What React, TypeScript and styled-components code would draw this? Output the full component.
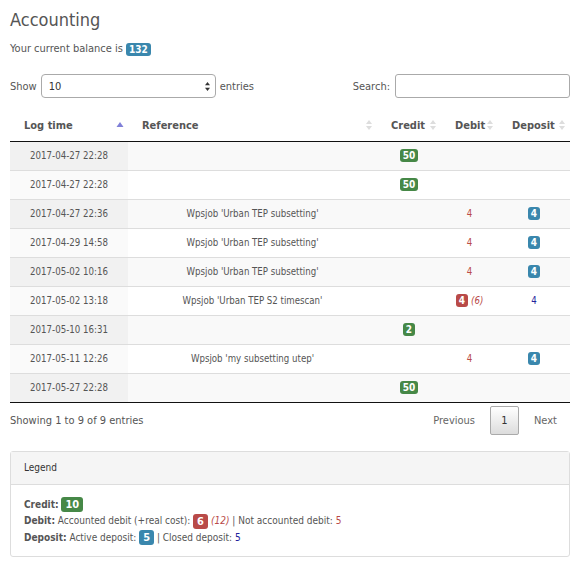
import React from "react";
import styled, { createGlobalStyle } from "styled-components";

const Global = createGlobalStyle`
  html, body { margin: 0; padding: 0; background: #fff; }
  body { font-family: "DejaVu Sans Condensed", "DejaVu Sans", Verdana, sans-serif; color: #555; }
  * { box-sizing: border-box; }
`;

const Page = styled.div`
  padding: 0 13px 0 10px;
  width: 583px;
`;

const Title = styled.h1`
  margin: 0;
  padding-top: 9px;
  font-size: 18px;
  font-weight: normal;
  line-height: 22px;
  color: #555;
`;

const Balance = styled.p`
  margin: 11px 0 0;
  font-size: 11px;
  line-height: 14px;
`;

const Controls = styled.div`
  display: flex;
  justify-content: space-between;
  align-items: center;
  margin-top: 18px;
  font-size: 11px;
`;

const LengthLabel = styled.label`
  display: flex;
  align-items: center;
  gap: 4px;
`;

const SelectBox = styled.div`
  width: 175px;
  height: 24px;
  border: 1px solid #aaa;
  border-radius: 4px;
  display: flex;
  align-items: center;
  justify-content: space-between;
  padding: 0 4px 0 7px;
  font-size: 11px;
  color: #333;
  background: #fff;
`;

const SearchLabel = styled.label`
  display: flex;
  align-items: center;
  gap: 5px;
`;

const SearchInput = styled.div`
  width: 175px;
  height: 24px;
  border: 1px solid #aaa;
  border-radius: 3px;
  background: #fff;
`;

const Table = styled.table`
  margin-top: 12px;
  width: 560px;
  border-collapse: collapse;
  table-layout: fixed;
  font-size: 9.6px;
`;

const Th = styled.th<{ $w: number }>`
  width: ${(p) => p.$w}px;
  height: 31px;
  padding: 0 18px 0 14px;
  text-align: left;
  font-size: 11px;
  font-weight: bold;
  color: #555;
  border-bottom: 1px solid #111;
  position: relative;
`;

const SortIcon = styled.span`
  position: absolute;
  right: 4px;
  top: 50%;
  transform: translateY(-50%);
  display: flex;
`;

const Tr = styled.tr<{ $odd: boolean }>`
  background: ${(p) => (p.$odd ? "#f9f9f9" : "#fff")};
  & > td:first-child {
    background: ${(p) => (p.$odd ? "#f1f1f1" : "#fafafa")};
  }
`;

const Td = styled.td`
  height: 29px;
  padding: 0 8px;
  text-align: center;
  border-bottom: 1px solid #ddd;
  color: #555;
  white-space: nowrap;
  tr:last-child > & {
    border-bottom: 1px solid #111;
  }
`;

const Badge = styled.span<{ $c: string; $big?: boolean }>`
  display: inline-block;
  background: ${(p) => p.$c};
  color: #fff;
  font-weight: bold;
  font-size: ${(p) => (p.$big ? "11px" : "10px")};
  line-height: ${(p) => (p.$big ? "15px" : "13px")};
  padding: 0 ${(p) => (p.$big ? "4px" : "3px")};
  border-radius: 3px;
  vertical-align: middle;
`;

const RedText = styled.span`
  color: #b94a48;
`;

const RealCost = styled.em`
  color: #b94a48;
  margin-left: 3px;
`;

const BlueText = styled.span`
  color: #22229c;
`;

const Footer = styled.div`
  display: flex;
  justify-content: space-between;
  align-items: center;
  margin-top: 3px;
  font-size: 11px;
`;

const Pager = styled.div`
  display: flex;
  align-items: center;
`;

const PageLink = styled.span<{ $current?: boolean }>`
  display: inline-flex;
  align-items: center;
  justify-content: center;
  height: 29px;
  min-width: ${(p) => (p.$current ? "29px" : "0")};
  padding: 0 ${(p) => (p.$current ? "0" : "10px")};
  margin: 0 2px;
  color: ${(p) => (p.$current ? "#333" : "#666")};
  border: 1px solid ${(p) => (p.$current ? "#aaa" : "transparent")};
  border-radius: 2px;
  background: ${(p) => (p.$current ? "linear-gradient(#fff, #dcdcdc)" : "transparent")};
`;

const Panel = styled.div`
  margin-top: 16px;
  width: 560px;
  border: 1px solid #ddd;
  border-radius: 3px;
  font-size: 10px;
`;

const PanelHead = styled.div`
  height: 33px;
  display: flex;
  align-items: center;
  padding: 0 13px;
  background: #f5f5f5;
  border-bottom: 1px solid #ddd;
  color: #333;
`;

const PanelBody = styled.div`
  padding: 12px 13px 11px;
  display: flex;
  flex-direction: column;
  gap: 1px;
  line-height: 15px;
`;

const LegendLine = styled.div`
  color: #555;
`;

const Strong = styled.strong`
  font-weight: bold;
`;

const GREEN = "#468847";
const BLUE = "#3a87ad";
const RED = "#b94a48";

function SortBoth() {
  return (
    <svg width="8" height="12" viewBox="0 0 8 12">
      <path d="M4 1 L7 5 L1 5 Z" fill="#ddd" />
      <path d="M4 11 L7 7 L1 7 Z" fill="#ddd" />
    </svg>
  );
}

function SortAsc() {
  return (
    <svg width="8" height="12" viewBox="0 0 8 12">
      <path d="M4 3 L7.5 8 L0.5 8 Z" fill="#8080d8" />
    </svg>
  );
}

type Row = {
  time: string;
  ref?: string;
  credit?: number;
  debit?: number;
  debitBadge?: number;
  real?: number;
  deposit?: number;
  depositClosed?: number;
};

const rows: Row[] = [
  { time: "2017-04-27 22:28", credit: 50 },
  { time: "2017-04-27 22:28", credit: 50 },
  { time: "2017-04-27 22:36", ref: "Wpsjob 'Urban TEP subsetting'", debit: 4, deposit: 4 },
  { time: "2017-04-29 14:58", ref: "Wpsjob 'Urban TEP subsetting'", debit: 4, deposit: 4 },
  { time: "2017-05-02 10:16", ref: "Wpsjob 'Urban TEP subsetting'", debit: 4, deposit: 4 },
  { time: "2017-05-02 13:18", ref: "Wpsjob 'Urban TEP S2 timescan'", debitBadge: 4, real: 6, depositClosed: 4 },
  { time: "2017-05-10 16:31", credit: 2 },
  { time: "2017-05-11 12:26", ref: "Wpsjob 'my subsetting utep'", debit: 4, deposit: 4 },
  { time: "2017-05-27 22:28", credit: 50 },
];

const cols: { label: string; w: number; asc?: boolean }[] = [
  { label: "Log time", w: 118, asc: true },
  { label: "Reference", w: 249 },
  { label: "Credit", w: 64 },
  { label: "Debit", w: 57 },
  { label: "Deposit", w: 72 },
];

export default function App() {
  return (
    <Page>
      <Global />
      <Title>Accounting</Title>
      <Balance>
        Your current balance is <Badge $c={BLUE}>132</Badge>
      </Balance>
      <Controls>
        <LengthLabel>
          Show
          <SelectBox>
            <span>10</span>
            <svg width="7" height="11" viewBox="0 0 7 11">
              <path d="M3.5 1 L6 4.2 L1 4.2 Z" fill="#333" />
              <path d="M3.5 10 L6 6.8 L1 6.8 Z" fill="#333" />
            </svg>
          </SelectBox>
          entries
        </LengthLabel>
        <SearchLabel>
          Search:
          <SearchInput />
        </SearchLabel>
      </Controls>
      <Table>
        <thead>
          <tr>
            {cols.map((c) => (
              <Th key={c.label} $w={c.w}>
                {c.label}
                <SortIcon>{c.asc ? <SortAsc /> : <SortBoth />}</SortIcon>
              </Th>
            ))}
          </tr>
        </thead>
        <tbody>
          {rows.map((r, i) => (
            <Tr key={i} $odd={i % 2 === 0}>
              <Td>{r.time}</Td>
              <Td>{r.ref ?? ""}</Td>
              <Td>{r.credit !== undefined && <Badge $c={GREEN}>{r.credit}</Badge>}</Td>
              <Td>
                {r.debit !== undefined && <RedText>{r.debit}</RedText>}
                {r.debitBadge !== undefined && (
                  <>
                    <Badge $c={RED}>{r.debitBadge}</Badge>
                    <RealCost>({r.real})</RealCost>
                  </>
                )}
              </Td>
              <Td>
                {r.deposit !== undefined && <Badge $c={BLUE}>{r.deposit}</Badge>}
                {r.depositClosed !== undefined && <BlueText>{r.depositClosed}</BlueText>}
              </Td>
            </Tr>
          ))}
        </tbody>
      </Table>
      <Footer>
        <span>Showing 1 to 9 of 9 entries</span>
        <Pager>
          <PageLink>Previous</PageLink>
          <PageLink $current>1</PageLink>
          <PageLink>Next</PageLink>
        </Pager>
      </Footer>
      <Panel>
        <PanelHead>Legend</PanelHead>
        <PanelBody>
          <LegendLine>
            <Strong>Credit:</Strong> <Badge $c={GREEN} $big>10</Badge>
          </LegendLine>
          <LegendLine>
            <Strong>Debit:</Strong> Accounted debit (+real cost): <Badge $c={RED} $big>6</Badge>
            <RealCost>(12)</RealCost> | Not accounted debit: <RedText>5</RedText>
          </LegendLine>
          <LegendLine>
            <Strong>Deposit:</Strong> Active deposit: <Badge $c={BLUE} $big>5</Badge> | Closed deposit:{" "}
            <BlueText>5</BlueText>
          </LegendLine>
        </PanelBody>
      </Panel>
    </Page>
  );
}
